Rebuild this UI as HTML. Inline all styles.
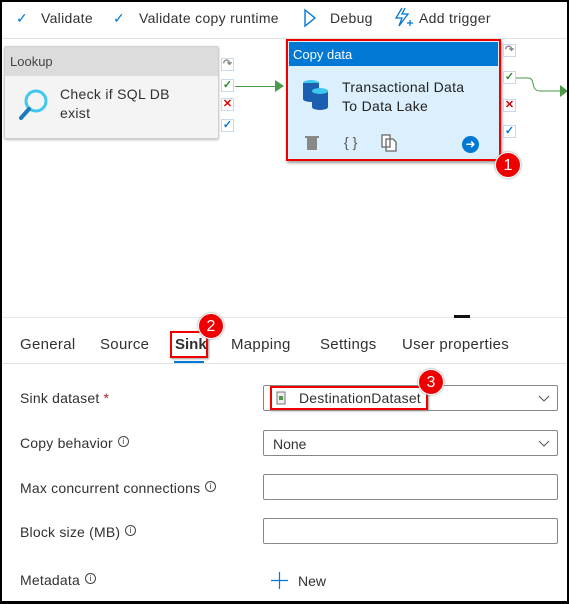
<!DOCTYPE html>
<html><head><style>
*{margin:0;padding:0;box-sizing:border-box}
body{width:569px;height:604px;background:#fff;font-family:"Liberation Sans",sans-serif;color:#323130;position:relative;overflow:hidden}
.frame{position:absolute;left:0;top:0;width:569px;height:604px;border:2px solid #000;border-bottom-width:3px;pointer-events:none;z-index:9}
.a{position:absolute}
.t{font-size:14px;white-space:nowrap}
.lbl{position:absolute;left:20px;font-size:14px;color:#323130;white-space:nowrap;letter-spacing:0.2px}
.inp{position:absolute;left:263px;width:295px;height:26px;border:1px solid #8a8886;border-radius:2px}
.info{display:inline-block;width:11px;height:11px;border:1px solid #444;border-radius:50%;font-size:8px;text-align:center;line-height:9px;vertical-align:4px;margin-left:5px}
.badge{position:absolute;width:26px;height:26px;border-radius:50%;background:#e00;color:#fff;font-size:16px;text-align:center;line-height:26px;border:1px solid #fff;box-shadow:0 0 2px #888}
.sm{position:absolute;width:13px;height:13px;border:1px solid #c8d8ee;background:#fff;font-size:11px;line-height:11px;text-align:center;font-weight:bold}
.tab{position:absolute;top:336px;font-size:15px;white-space:nowrap;letter-spacing:0.3px}
</style></head><body>
<div class="frame"></div>
<!-- toolbar -->
<div class="a t" style="left:16px;top:10px;color:#0078d4">✓</div><div class="a t" style="left:41px;top:10px;letter-spacing:0.3px">Validate</div>
<div class="a t" style="left:113px;top:10px;color:#0078d4">✓</div><div class="a t" style="left:139px;top:10px;letter-spacing:0.3px">Validate copy runtime</div>
<svg class="a" style="left:303px;top:8px" width="14" height="20"><path d="M2 2 L12 10 L2 18 Z" fill="none" stroke="#0078d4" stroke-width="1.4"/></svg>
<div class="a t" style="left:330px;top:10px;letter-spacing:0.3px">Debug</div>
<svg class="a" style="left:393px;top:6px" width="20" height="22"><path d="M9 2 L3 12 H9 L6 20 L15 8 H9 L12 2" fill="none" stroke="#0078d4" stroke-width="1.3"/><path d="M14 17h6M17 14v6" stroke="#0078d4" stroke-width="1.2"/></svg>
<div class="a t" style="left:419px;top:10px;letter-spacing:0.3px">Add trigger</div>
<div class="a" style="left:2px;top:38px;width:565px;height:1px;background:#e1e1e1"></div>
<!-- lookup -->
<div class="a" style="left:4px;top:46px;width:215px;height:93px;border:1px solid #d0d0d0;border-radius:2px;background:#f4f4f4;box-shadow:0 1px 2px #bbb">
<div style="height:29px;background:#dcdcdc;font-size:13px;padding:7px 5px;color:#444">Lookup</div>
<svg class="a" style="left:12px;top:40px" width="34" height="34"><circle cx="19" cy="14" r="10" fill="none" stroke="#3ec8f0" stroke-width="3"/><path d="M12 22 L4 31" stroke="#1a7bbf" stroke-width="4" stroke-linecap="round"/></svg>
<div class="a t" style="left:55px;top:38px;line-height:19px;letter-spacing:0.3px">Check if SQL DB<br>exist</div>
</div>
<div class="sm" style="left:221px;top:58px;color:#888">↷</div>
<div class="sm" style="left:221px;top:79px;color:#2a8a2a">✓</div>
<div class="sm" style="left:221px;top:98px;color:#d00">✕</div>
<div class="sm" style="left:221px;top:119px;color:#0078d4">✓</div>
<div class="a" style="left:235px;top:86px;width:46px;height:1px;background:#4a9a4a"></div>
<svg class="a" style="left:275px;top:80px" width="10" height="12"><path d="M0 0 L9 6 L0 12Z" fill="#4a9a4a"/></svg>
<!-- copy data -->
<div class="a" style="left:286px;top:39px;width:215px;height:122px;border:2px solid #e00;background:#dceffc;box-shadow:1px 2px 3px #999">
<div style="height:24px;background:#0078d4;color:#fff;font-size:13px;padding:5px 4px;margin:1px">Copy data</div>
<svg class="a" style="left:12px;top:36px" width="32" height="36"><ellipse cx="11" cy="6" rx="8" ry="3" fill="#3ec8f0"/><rect x="3" y="6" width="16" height="16" fill="#1a5fb0"/><ellipse cx="11" cy="22" rx="8" ry="3" fill="#1a5fb0"/><rect x="12" y="14" width="16" height="16" fill="#1a5fb0"/><ellipse cx="20" cy="30" rx="8" ry="3" fill="#1a5fb0"/><ellipse cx="20" cy="14" rx="8" ry="3" fill="#3ec8f0"/></svg>
<div class="a t" style="left:54px;top:37px;line-height:19px;color:#222;letter-spacing:0.3px">Transactional Data<br>To Data Lake</div>
<svg class="a" style="left:17px;top:94px" width="14" height="16"><rect x="2" y="3" width="10" height="12" fill="#888"/><rect x="0" y="1" width="14" height="2" fill="#888"/></svg>
<div class="a t" style="left:56px;top:93px;color:#555">{ }</div>
<svg class="a" style="left:93px;top:93px" width="16" height="18"><path d="M1 1h8v12H1z M5 5h7l3 3v9H5z" fill="#fff" stroke="#666" stroke-width="1.3"/></svg>
<div class="a" style="left:174px;top:95px;width:17px;height:17px;border-radius:50%;background:#0078d4;color:#fff;font-size:12px;text-align:center;line-height:17px">➜</div>
</div>
<div class="sm" style="left:503px;top:44px;color:#888">↷</div>
<div class="sm" style="left:503px;top:71px;color:#2a8a2a">✓</div>
<div class="sm" style="left:503px;top:99px;color:#d00">✕</div>
<div class="sm" style="left:503px;top:125px;color:#0078d4">✓</div>
<svg class="a" style="left:516px;top:74px" width="52" height="24"><path d="M0 4 H12 C20 4 14 17 24 17 H44" fill="none" stroke="#4a9a4a"/><path d="M44 11 L52 17 L44 23Z" fill="#4a9a4a"/></svg>
<div class="badge" style="left:495px;top:152px">1</div>
<!-- splitter -->
<div class="a" style="left:2px;top:317px;width:565px;height:1px;background:#e8e8e8"></div>
<div class="a" style="left:454px;top:315px;width:16px;height:3px;background:#111"></div>
<!-- tabs -->
<div class="tab" style="left:20px">General</div>
<div class="tab" style="left:100px">Source</div>
<div class="a" style="left:170px;top:331px;width:38px;height:27px;border:2px solid #e00;box-shadow:1px 1px 2px #999"></div>
<div class="tab" style="left:175px;font-weight:bold;letter-spacing:0">Sink</div>
<div class="a" style="left:174px;top:361px;width:30px;height:2px;background:#0078d4"></div>
<div class="tab" style="left:231px">Mapping</div>
<div class="tab" style="left:320px">Settings</div>
<div class="tab" style="left:402px">User properties</div>
<div class="badge" style="left:198px;top:313px">2</div>
<div class="a" style="left:2px;top:363px;width:565px;height:1px;background:#e1e1e1"></div>
<!-- form -->
<div class="lbl" style="top:390px">Sink dataset <span style="color:#a4262c">*</span></div>
<div class="inp" style="top:385px"></div>
<div class="a" style="left:270px;top:386px;width:158px;height:24px;border:2px solid #e00;box-shadow:1px 1px 2px #999"></div>
<svg class="a" style="left:276px;top:391px" width="10" height="14"><rect x="1" y="1" width="8" height="12" fill="#eee" stroke="#777"/><rect x="3" y="5" width="4" height="4" fill="#4a9a4a"/></svg>
<div class="a t" style="left:299px;top:390px;letter-spacing:0.2px">DestinationDataset</div>
<svg class="a" style="left:538px;top:395px" width="12" height="8"><path d="M1 1 L6 6 L11 1" fill="none" stroke="#555"/></svg>
<div class="badge" style="left:418px;top:369px">3</div>
<div class="lbl" style="top:435px">Copy behavior<span class="info">i</span></div>
<div class="inp" style="top:430px"></div>
<div class="a t" style="left:273px;top:436px">None</div>
<svg class="a" style="left:538px;top:440px" width="12" height="8"><path d="M1 1 L6 6 L11 1" fill="none" stroke="#555"/></svg>
<div class="lbl" style="top:480px">Max concurrent connections<span class="info">i</span></div>
<div class="inp" style="top:474px"></div>
<div class="lbl" style="top:524px">Block size (MB)<span class="info">i</span></div>
<div class="inp" style="top:518px"></div>
<div class="lbl" style="top:572px">Metadata<span class="info">i</span></div>
<svg class="a" style="left:271px;top:572px" width="17" height="17"><path d="M8.5 0v17M0 8.5h17" stroke="#0078d4" stroke-width="1.2"/></svg>
<div class="a t" style="left:298px;top:573px">New</div>
</body></html>
